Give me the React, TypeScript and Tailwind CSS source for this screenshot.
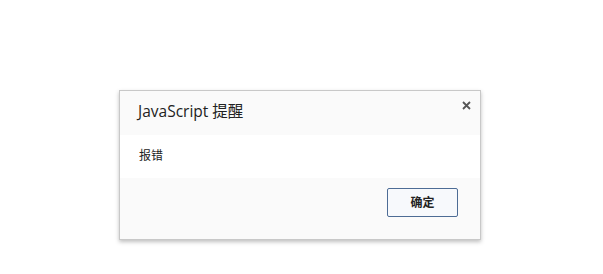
export default function App() {
  return (
    <div
      className="w-[603px] h-[274px] bg-white pt-[90px] pl-[119px]"
      style={{ fontFamily: '"Open Sans", "Noto Sans CJK SC", sans-serif' }}
    >
      <div className="relative w-[362px] border border-[#c8c8c8] shadow-[0_2px_4px_rgba(0,0,0,0.25)]">
        {/* Title */}
        <div className="h-[44px] bg-[#fafafa] pl-[18px] pt-[10px] text-[15.5px] leading-[20px] text-[#222]">
          JavaScript 提醒
        </div>
        <button className="absolute right-[7px] top-[7px] w-[14px] h-[14px] flex items-center justify-center text-[#555]">
          <svg width="9" height="9" viewBox="0 0 9 9">
            <path d="M1 1L8 8M8 1L1 8" stroke="currentColor" strokeWidth="1.8" />
          </svg>
        </button>

        {/* Message */}
        <div className="h-[43px] bg-white pl-[19px] pt-[13px] text-[12px] leading-[16px] text-[#222]">
          报错
        </div>

        {/* Footer */}
        <div className="h-[61px] bg-[#fafafa] flex justify-end pr-[22px] pt-[10px]">
          <button className="w-[71px] h-[29px] border border-[#4d6c95] rounded-[2px] bg-[#f7f9fc] text-[12px] font-bold text-[#222]">
            确定
          </button>
        </div>
      </div>
    </div>
  );
}
